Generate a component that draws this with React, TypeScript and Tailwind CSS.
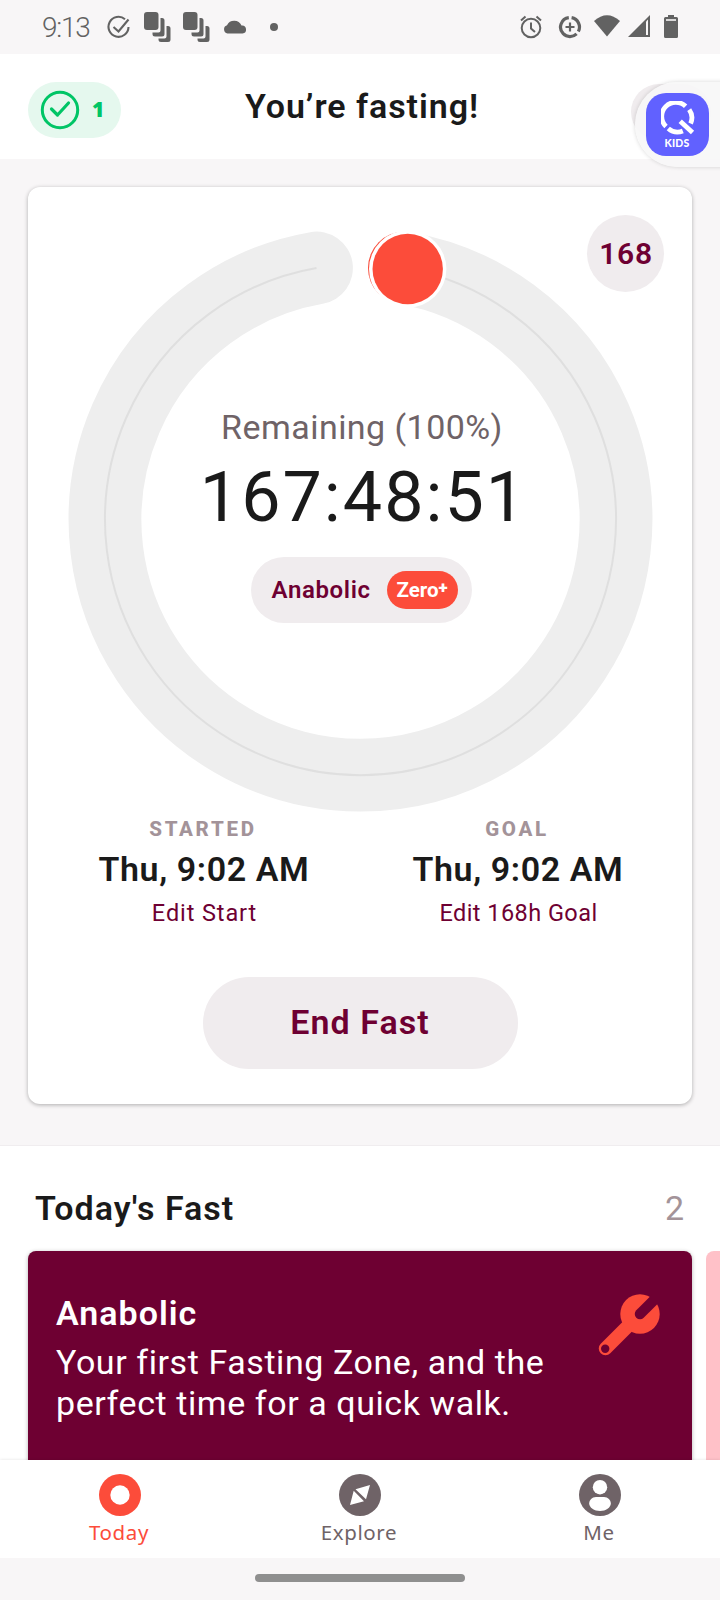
import type { ReactNode } from 'react'

function CopiesIcon() {
  return (
    <svg width="28" height="32" viewBox="0 -1 28 32" fill="#626262">
      <rect x="0" y="0" width="14.500" height="18" rx="3" />
      <path d="M16.500 6h1.500a2.500 2.500 0 0 1 2.500 2.500V22a2.500 2.500 0 0 1-2.500 2.500H11a2.500 2.500 0 0 1-2.500-2.500v-1.500h6a2 2 0 0 0 2-2z" />
      <path d="M22.500 14H24a2.500 2.500 0 0 1 2.500 2.500V27.500A2.500 2.500 0 0 1 24 30H17a2.500 2.500 0 0 1-2.500-2.500V26.500h6a2 2 0 0 0 2-2z" />
    </svg>
  )
}

function StatusBar() {
  return (
    <div className="flex h-[54px] shrink-0 items-center justify-between pl-[42px] pr-[42px] text-[#626262]">
      <div className="flex items-center">
        <span className="w-[65px] pt-[2px] text-[28px] font-light leading-[52px] tracking-[-1.2px]">9:13</span>
        <svg className="mr-[12px]" width="25" height="25" viewBox="0 0 25 25" fill="none" stroke="#626262" strokeWidth="2.100">
          <path d="M18 4.200A10 10 0 1 0 21.500 12" />
          <path d="M6.500 12l5 4.500L21.500 4.500" />
        </svg>
        <div className="flex gap-[11px]">
          <CopiesIcon />
          <CopiesIcon />
        </div>
        <svg className="ml-[12px]" width="24" height="14" viewBox="0 0 24 14" fill="#626262">
          <path d="M4.500 13.500A4.300 4.300 0 0 1 4 5.200A8 8 0 0 1 18.500 5.500A4 4 0 0 1 19.500 13.500z" />
        </svg>
        <span className="ml-[23px] h-2 w-2 rounded-full bg-[#626262]" />
      </div>
      <div className="flex items-center">
        <svg width="22" height="24" viewBox="0 0 22 24" fill="none" stroke="#626262" strokeWidth="2">
          <circle cx="11" cy="13" r="9.300" />
          <path d="M11 7.500v6l4 3.500M1 5.500l4.500-4M21 5.500l-4.500-4" />
        </svg>
        <svg className="ml-4" width="24" height="24" viewBox="0 0 24 24" fill="none" stroke="#626262">
          <path strokeWidth="3.200" d="M10.800 2.700A9.500 9.500 0 0 0 5.200 18.700A9.500 9.500 0 0 0 18.600 18.900M20.300 16.600A9.500 9.500 0 0 0 13.600 2.700" />
          <path strokeWidth="2.200" d="M12 7.500v9M7.500 12h9" />
        </svg>
        <svg className="mb-[2px] ml-3" width="26" height="22" viewBox="0 0 26 22" fill="#626262">
          <path d="M0 6Q13-5.500 26 6L13 21.500z" />
        </svg>
        <svg className="mb-[2px] ml-2" width="22" height="22" viewBox="0 0 22 22">
          <path fill="#626262" d="M0 22L22 0v22z" />
          <path fill="#f8f6f7" d="M18 6.500l2-2V20h-2z" />
        </svg>
        <svg className="ml-[14px]" width="14" height="24" viewBox="0 0 14 24">
          <path fill="#626262" d="M4 0h6v2h2.500A1.500 1.500 0 0 1 14 3.500v18a1.500 1.500 0 0 1-1.500 1.500h-11A1.500 1.500 0 0 1 0 21.500v-18A1.500 1.500 0 0 1 1.500 2H4z" />
          <path fill="#f8f6f7" d="M2 4.200h10v1.600H2z" />
        </svg>
      </div>
    </div>
  )
}

function Header() {
  return (
    <header className="relative flex h-[105px] shrink-0 items-center bg-white">
      <div className="ml-7 mt-[6px] flex h-14 w-[93px] items-center rounded-full bg-[#e5f8ee] pl-[12px] text-[#00c566]">
        <svg width="40" height="40" viewBox="0 0 40 40" fill="none" stroke="currentColor" strokeWidth="3">
          <circle cx="20" cy="20" r="17.700" />
          <path d="M11.500 19l6 6L28.500 13" strokeLinecap="round" strokeLinejoin="round" strokeWidth="3.200" />
        </svg>
        <span className="ml-3 font-['Noto_Sans'] text-[21px] font-black">1</span>
      </div>
      <h1 className="absolute inset-x-0 top-[30px] pl-1 text-center text-[34px] font-semibold leading-[44px] tracking-[0.95px] text-[#1a1a1a]">
        You’re fasting!
      </h1>
      <div className="absolute left-[631px] top-[30px] h-[56px] w-[80px] rounded-full bg-[#f0ecee]" />
      <div className="absolute left-[635px] top-[28px] h-[85px] w-[100px] rounded-l-full bg-[#f7f7f7]/90 shadow-[0_0_4px_rgba(0,0,0,0.16)]">
        <div className="ml-[11px] mt-[11px] flex h-[63px] w-[63px] flex-col items-center rounded-[20px] bg-[#6161ff] pt-2">
          <svg width="34" height="34" viewBox="0 0 34 34" fill="none" stroke="#fff" strokeWidth="4.800">
            <path d="M5 25.500A14 14 0 0 1 24.600 5.300" />
            <path d="M28.200 8.600A14 14 0 0 1 29.600 22.500" />
            <path d="M7.300 27.500A14 14 0 0 0 21.800 30" />
            <path d="M19.200 20.200L31.500 31.500" />
          </svg>
          <span className="-ml-px mt-[2px] font-['Lato'] text-[10.500px] font-black leading-[13px] tracking-[0.2px] text-white">KIDS</span>
        </div>
      </div>
    </header>
  )
}

function TimerRing() {
  return (
    <div className="relative mt-[34px] h-[592px]">
      <svg width="664" height="592" viewBox="28 221 664 592" fill="none">
        <path d="M404.500 268A255.500 255.500 0 1 1 316.500 268" stroke="#eeeeee" strokeWidth="72.800" strokeLinecap="round" />
        <path d="M404.500 268A255.500 255.500 0 1 1 316.500 268" stroke="#dfdfdf" strokeWidth="2" />
        <circle cx="404.500" cy="268" r="36.500" fill="#fc4c3a" />
        <circle cx="407.700" cy="269" r="38.700" fill="#fff" />
        <circle cx="407.700" cy="269" r="35.200" fill="#fc4c3a" />
      </svg>
      <div className="absolute left-[559px] top-[-6px] flex h-[77px] w-[77px] items-center justify-center rounded-full bg-[#f0ecee] pl-px text-[30px] font-semibold tracking-[0.7px] text-[#6e0032]">
        168
      </div>
      <div className="absolute inset-x-0 top-[184px] flex flex-col items-center">
        <p className="pl-[4px] text-[34px] leading-[44px] tracking-[0.45px] text-[#6f6367]">Remaining (100%)</p>
        <p className="mt-[5px] pl-[7px] text-[70px] leading-[86px] tracking-[2px] text-[#1a1a1a]">167:48:51</p>
        <div className="ml-[2px] mt-[17px] flex h-[66px] w-[221px] items-center justify-between rounded-full bg-[#f0ecee] pl-[21px] pr-[14px]">
          <span className="text-[24px] font-semibold tracking-[0.65px] text-[#6e0032]">Anabolic</span>
          <span className="flex h-[38px] w-[71px] items-center justify-center rounded-full bg-[#fc4c3a] text-[20.500px] font-bold text-white">
            Zero<span className="-mt-[5px] text-[17px] font-black">+</span>
          </span>
        </div>
      </div>
    </div>
  )
}

function TimeColumn({ label, time, children }: { label: string; time: string; children: ReactNode }) {
  return (
    <div className="flex w-[314px] flex-col items-center">
      <span className="mt-px text-[20.500px] font-extrabold leading-[30px] tracking-[2.7px] text-[#a39399]">{label}</span>
      <span className="mt-[3px] pl-[2px] text-[34px] font-semibold leading-[44px] tracking-[0.6px] text-[#1a1a1a]">{time}</span>
      {children}
    </div>
  )
}

function FastCard() {
  return (
    <section className="mx-7 mt-7 h-[917px] shrink-0 rounded-[12px] bg-white shadow-[0_1px_4px_rgba(0,0,0,0.3)]">
      <TimerRing />
      <div className="flex justify-center">
        <TimeColumn label="STARTED" time="Thu, 9:02 AM">
          <span className="mt-[6px] pl-[3px] text-[23.500px] leading-[32px] tracking-[0.9px] text-[#6e0032]">Edit Start</span>
        </TimeColumn>
        <TimeColumn label="GOAL" time="Thu, 9:02 AM">
          <span className="mt-[6px] pl-[3px] text-[23.500px] leading-[32px] tracking-[0.45px] text-[#6e0032]">Edit 168h Goal</span>
        </TimeColumn>
      </div>
      <button className="mx-auto mt-[48px] block h-[92px] w-[315px] rounded-full bg-[#f0ecee] pb-[2px] text-[34px] font-semibold tracking-[1.05px] text-[#6e0032]">
        End Fast
      </button>
    </section>
  )
}

function TodaysFast() {
  return (
    <section className="mt-[41px] h-[315px] shrink-0 overflow-hidden border-t border-[#f0edef] bg-white">
      <div className="flex items-center justify-between pl-[35px] pr-[36px] pt-[40px] leading-[44px]">
        <h2 className="text-[34px] font-semibold tracking-[1px] text-[#1a1a1a]">Today's Fast</h2>
        <span className="text-[34px] text-[#a39399]">2</span>
      </div>
      <div className="ml-7 mt-[21px] flex gap-[14px]">
        <div className="flex h-[230px] w-[664px] shrink-0 justify-between rounded-[8px] bg-[#6e0032] pl-7 pr-8 pt-[40px] text-white shadow-[0_1px_4px_rgba(0,0,0,0.3)]">
          <div className="whitespace-nowrap">
            <h3 className="text-[34px] font-semibold leading-[44px] tracking-[1px]">Anabolic</h3>
            <p className="mt-[7px] text-[34px] leading-[41px] tracking-[0.57px]">
              Your first Fasting Zone, and the
              <br />
              perfect time for a quick walk.
            </p>
          </div>
          <svg className="mt-[3px] shrink-0" width="62" height="62" viewBox="0 0 62 62">
            <path stroke="#fc4c3a" strokeWidth="13.500" strokeLinecap="round" d="M7.500 54.500L34 28" />
            <circle cx="42" cy="20" r="19.700" fill="#fc4c3a" />
            <path stroke="#6e0032" strokeWidth="10.500" strokeLinecap="round" d="M42 20L64-2" />
            <circle cx="7.200" cy="54.700" r="4.200" fill="#6e0032" />
          </svg>
        </div>
        <div className="h-[230px] w-[200px] shrink-0 rounded-[8px] bg-[#ffc1c8]" />
      </div>
    </section>
  )
}

function NavItem({ label, active, children }: { label: string; active?: boolean; children: ReactNode }) {
  return (
    <div className={active ? 'flex w-[240px] flex-col items-center pt-[14px] text-[#fc4c3a]' : 'flex w-[240px] flex-col items-center pt-[14px] text-[#6f6367]'}>
      <svg width="42" height="42" viewBox="0 0 42 42">
        <circle cx="21" cy="21" r="21" fill="currentColor" />
        {children}
      </svg>
      <span className="mr-[2px] mt-[2px] font-['Noto_Sans'] text-[20.500px] leading-[28px] tracking-[0.6px]">{label}</span>
    </div>
  )
}

export default function App() {
  return (
    <div className="flex h-[1600px] w-[720px] flex-col overflow-hidden bg-[#f8f6f7] font-['Roboto','Noto_Sans',sans-serif]">
      <StatusBar />
      <Header />
      <FastCard />
      <TodaysFast />
      <nav className="z-10 flex h-[98px] shrink-0 bg-white shadow-[0_0_3px_rgba(0,0,0,0.12)]">
        <NavItem label="Today" active>
          <circle cx="21" cy="21" r="9.700" fill="#fff" />
        </NavItem>
        <NavItem label="Explore">
          <path fill="#fff" d="M31 11L27 25.300L16.500 15.300zM11 31L14.700 16.700L25 27.300z" />
        </NavItem>
        <NavItem label="Me">
          <circle cx="21" cy="13.200" r="7.200" fill="#fff" />
          <path fill="#fff" d="M17 23h8c4 0 6.800 3 6.800 6.500c0 4-5 7.500-10.800 7.500s-10.800-3.500-10.800-7.500c0-3.500 2.800-6.500 6.800-6.500z" />
        </NavItem>
      </nav>
      <div className="z-10 flex h-[42px] shrink-0 justify-center bg-[#f8f6f7] pt-4">
        <div className="h-2 w-[210px] rounded-full bg-[#8f8f8f]" />
      </div>
    </div>
  )
}
